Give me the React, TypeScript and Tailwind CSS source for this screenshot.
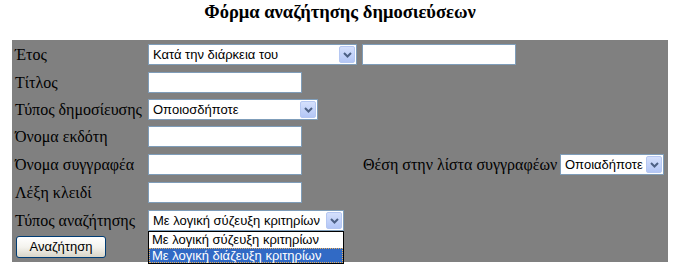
import React from "react";

const serif = { fontFamily: '"Liberation Serif", "Times New Roman", serif' };
const sans = { fontFamily: '"Liberation Sans", Arial, sans-serif' };

function Arrow() {
  return (
    <div className="absolute right-[1px] top-[1px] bottom-[1px] w-[16px] rounded-[2px] border border-[#B5C7F2] bg-gradient-to-b from-[#D5E0FC] to-[#B3C6F6] flex items-center justify-center">
      <svg width="9" height="6" viewBox="0 0 9 6">
        <path d="M1 1 L4.5 4.5 L8 1" fill="none" stroke="#4D6185" strokeWidth="2" />
      </svg>
    </div>
  );
}

function Select({ w, text }: { w: string; text: string }) {
  return (
    <div
      className={`relative h-[21px] ${w} border border-[#7F9DB9] bg-white text-[13px] leading-[19px] pl-[4px] text-black whitespace-nowrap overflow-hidden`}
      style={sans}
    >
      {text}
      <Arrow />
    </div>
  );
}

function Input({ w = "w-[154px]" }: { w?: string }) {
  return <div className={`h-[21px] ${w} border border-[#7F9DB9] bg-white`} />;
}

function Label({ children }: { children: React.ReactNode }) {
  return (
    <div className="w-[133px] text-[16px] leading-[18px] text-black whitespace-nowrap" style={serif}>
      {children}
    </div>
  );
}

export default function App() {
  return (
    <div className="w-[680px] h-[276px] bg-white relative">
      <div className="h-[40px] pt-[3px] text-center">
        <div className="text-[18.5px] leading-[18px] font-bold text-black" style={serif}>
          Φόρμα αναζήτησης δημοσιεύσεων
        </div>
      </div>
      <div className="ml-[12px] w-[656px] h-[222px] bg-[#808080] pt-[4px] pl-[3px] flex flex-col">
        <div className="flex items-center h-[21px]">
          <Label>Έτος</Label>
          <Select w="w-[209px]" text="Κατά την διάρκεια του" />
          <div className="ml-[5px]">
            <Input />
          </div>
        </div>
        <div className="flex items-center h-[21px] mt-[7px]">
          <Label>Τίτλος</Label>
          <Input />
        </div>
        <div className="flex items-center h-[21px] mt-[6px]">
          <Label>Τύπος δημοσίευσης</Label>
          <Select w="w-[170px]" text="Οποιοσδήποτε" />
        </div>
        <div className="flex items-center h-[21px] mt-[6px]">
          <Label>Όνομα εκδότη</Label>
          <Input />
        </div>
        <div className="flex items-center h-[21px] mt-[7px]">
          <Label>Όνομα συγγραφέα</Label>
          <Input />
          <div className="ml-[61px] text-[16px] leading-[18px] text-black whitespace-nowrap w-[197px]" style={serif}>
            Θέση στην λίστα συγγραφέων
          </div>
          <Select w="w-[104px]" text="Οποιαδήποτε" />
        </div>
        <div className="flex items-center h-[21px] mt-[7px]">
          <Label>Λέξη κλειδί</Label>
          <Input />
        </div>
        <div className="flex items-center h-[21px] mt-[7px]">
          <Label>Τύπος αναζήτησης</Label>
          <div className="relative">
            <Select w="w-[196px]" text="Με λογική σύζευξη κριτηρίων" />
            <div
              className="absolute left-0 top-[21px] w-[196px] h-[33px] border border-black bg-white z-10 text-[13px] leading-[15px]"
              style={sans}
            >
              <div className="h-[16px] pl-[3px] text-black">Με λογική σύζευξη κριτηρίων</div>
              <div className="h-[15px] pl-[2px] bg-[#316AC5] text-white border border-dotted border-[#E8B060] leading-[13px]">
                Με λογική διάζευξη κριτηρίων
              </div>
            </div>
          </div>
        </div>
        <div className="mt-[5px] ml-[1px]">
          <div
            className="w-[90px] h-[22px] rounded-[3px] border border-[#003C74] bg-gradient-to-b from-white via-[#F4F3EE] to-[#D9D5C8] text-[13px] leading-[20px] text-center text-black"
            style={sans}
          >
            Αναζήτηση
          </div>
        </div>
      </div>
    </div>
  );
}
